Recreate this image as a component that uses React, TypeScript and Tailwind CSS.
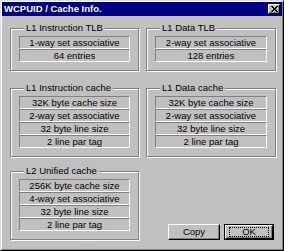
const font = { fontFamily: '"Liberation Sans", Arial, sans-serif' };

function Row({ children }: { children: React.ReactNode }) {
  return (
    <div className="flex h-[13px] items-center justify-center border border-b-white border-l-[#808080] border-r-white border-t-[#808080] text-[9.5px] leading-none text-black">
      {children}
    </div>
  );
}

function Group({ title, rows }: { title: string; rows: string[] }) {
  return (
    <fieldset className="border border-[#808080] px-[8px] pb-[8px] pt-[2px] shadow-[1px_1px_0_#fff,inset_1px_1px_0_#fff]">
      <legend className="ml-[5px] bg-[#c0c0c0] px-[2px] text-[9.5px] leading-[12px] text-black">{title}</legend>
      <div className="flex flex-col">
        {rows.map((r) => (
          <Row key={r}>{r}</Row>
        ))}
      </div>
    </fieldset>
  );
}

export default function App() {
  return (
    <div style={font} className="h-[251px] w-[284px] border border-b-black border-l-[#dfdfdf] border-r-black border-t-[#dfdfdf] bg-[#c0c0c0]">
      <div className="flex h-full flex-col border border-b-[#808080] border-l-white border-r-[#808080] border-t-white">
        {/* title bar */}
        <div className="flex h-[14px] items-center justify-between bg-[#000080] pl-[2px] pr-[2px]">
          <span className="text-[9.5px] font-bold leading-none text-white">WCPUID / Cache Info.</span>
          <button className="flex h-[10px] w-[12px] items-center justify-center border border-b-black border-l-white border-r-black border-t-white bg-[#c0c0c0] shadow-[inset_-1px_-1px_0_#808080]">
            <svg width="7" height="6" viewBox="0 0 7 6" shapeRendering="crispEdges">
              <path d="M0 0h2v1h-2zM5 0h2v1h-2zM1 1h2v1h-2zM4 1h2v1h-2zM2 2h3v2h-3zM1 4h2v1h-2zM4 4h2v1h-2zM0 5h2v1h-2zM5 5h2v1h-2z" fill="#000" />
            </svg>
          </button>
        </div>

        {/* body */}
        <div className="flex flex-col pl-[8px] pt-[6px]">
          <div className="flex gap-x-[7px]">
            <div className="w-[129px]">
              <Group title="L1 Instruction TLB" rows={["1-way set associative", "64 entries"]} />
            </div>
            <div className="w-[130px]">
              <Group title="L1 Data TLB" rows={["2-way set associative", "128 entries"]} />
            </div>
          </div>
          <div className="mt-[11px] flex gap-x-[7px]">
            <div className="w-[129px]">
              <Group
                title="L1 Instruction cache"
                rows={["32K byte cache size", "2-way set associative", "32 byte line size", "2 line par tag"]}
              />
            </div>
            <div className="w-[130px]">
              <Group
                title="L1 Data cache"
                rows={["32K byte cache size", "2-way set associative", "32 byte line size", "2 line par tag"]}
              />
            </div>
          </div>
          <div className="mt-[8px] flex gap-x-[7px]">
            <div className="w-[129px]">
              <Group
                title="L2 Unified cache"
                rows={["256K byte cache size", "4-way set associative", "32 byte line size", "2 line par tag"]}
              />
            </div>
            <div className="flex w-[130px] items-end justify-end gap-x-[4px] pr-[2px]">
              <button className="flex h-[16px] w-[52px] items-center justify-center border border-b-black border-l-white border-r-black border-t-white bg-[#c0c0c0] text-[9.5px] leading-none text-black shadow-[inset_-1px_-1px_0_#808080]">
                Copy
              </button>
              <button className="flex h-[16px] w-[50px] items-center justify-center border border-black bg-[#c0c0c0] p-0">
                <span className="flex h-full w-full items-center justify-center border border-b-black border-l-white border-r-black border-t-white shadow-[inset_-1px_-1px_0_#808080]">
                  <span className="flex h-[10px] w-[40px] items-center justify-center border border-dotted border-black text-[9.5px] leading-none text-black">
                    OK
                  </span>
                </span>
              </button>
            </div>
          </div>
        </div>
      </div>
    </div>
  );
}
